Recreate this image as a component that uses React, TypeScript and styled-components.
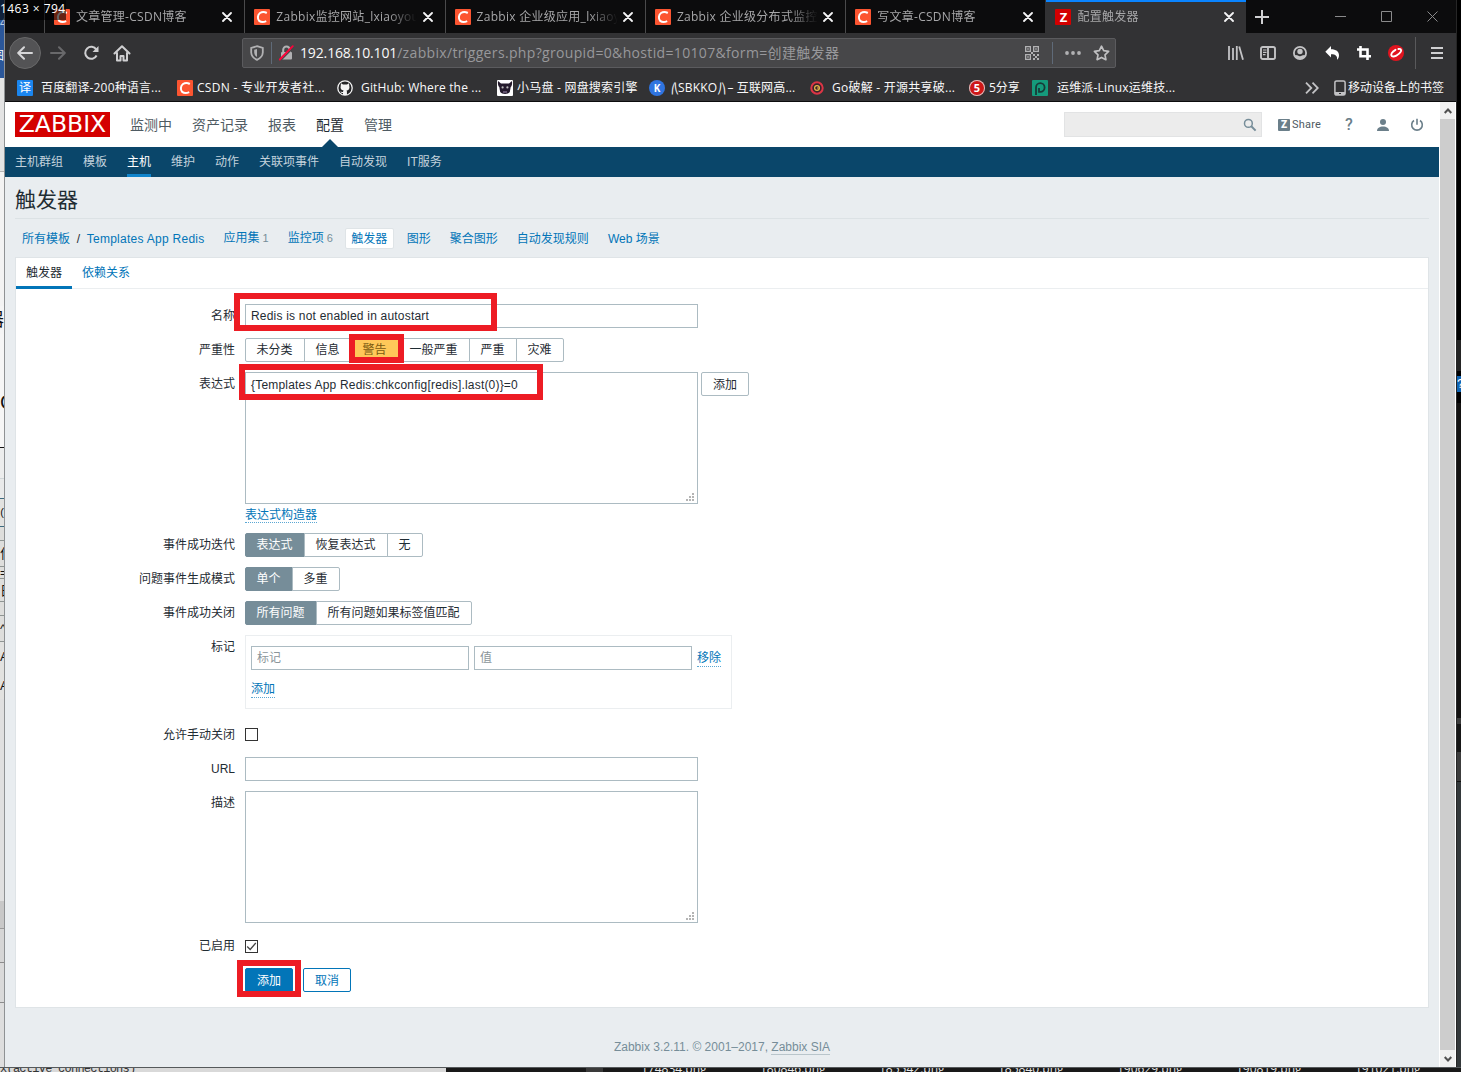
import React from "react";
import styled, { createGlobalStyle, css } from "styled-components";

const ui = `"Open Sans", "Noto Sans CJK SC", sans-serif`;
const web = `"Liberation Sans", "Noto Sans CJK SC", sans-serif`;

const Global = createGlobalStyle`
  *, *::before, *::after { box-sizing: border-box; }
  html, body { margin: 0; padding: 0; background: #000; overflow: hidden; }
  button, input, textarea { font: inherit; margin: 0; }
  svg { flex: none; }
`;

/* ---------- desktop behind the window ---------- */

const Desktop = styled.div`
  position: relative;
  width: 1461px;
  height: 1072px;
  display: grid;
  grid-template-columns: 5px 1451px 5px;
  grid-template-rows: 1067px 5px;
  overflow: hidden;
  font-family: ${web};
  font-size: 12px;
`;

const Strip = styled.div`
  display: flex;
  flex-direction: column;
  overflow: hidden;
  border-right: 1px solid #8f9294;
`;

const Slice = styled.div<{ h: number; bg: string; line?: string; fg?: string; size?: number; end?: boolean }>`
  flex: none;
  height: ${(p) => p.h}px;
  background: ${(p) => p.bg};
  border-bottom: ${(p) => (p.line ? `1px solid ${p.line}` : "0")};
  color: ${(p) => p.fg ?? "#111"};
  display: flex;
  align-items: center;
  justify-content: ${(p) => (p.end ? "flex-end" : "flex-start")};
  font-size: ${(p) => p.size ?? 13}px;
  line-height: 1;
  overflow: hidden;
  white-space: nowrap;
`;

const RightStrip = styled(Strip)`
  border: 0;
  border-left: 1px solid #262626;
  background: #050505;
`;

const Taskline = styled.div`
  grid-column: 1 / 4;
  display: flex;
  height: 5px;
  overflow: hidden;
  background: #191919;
  border-top: 1px solid #55595b;
`;

const Editor = styled.div`
  flex: none;
  width: 446px;
  height: 4px;
  background: #d9d9d9;
  color: #333;
  font: 12px/10px "Liberation Mono", monospace;
  letter-spacing: -0.75px;
  overflow: hidden;
  white-space: nowrap;
  span { display: block; margin-top: -4px; }
`;

const Gap = styled.div<{ w: number; bg: string }>`
  flex: none;
  width: ${(p) => p.w}px;
  background: ${(p) => p.bg};
`;

const FileName = styled.div`
  flex: none;
  width: 119px;
  color: #e6e6e6;
  font: 12px/12px ${ui};
  height: 4px;
  overflow: hidden;
  span { display: block; margin-top: -5px; }
`;

const SizeTip = styled.div`
  position: absolute;
  left: 0;
  top: 0;
  width: 66px;
  height: 20px;
  background: rgba(0, 0, 0, 0.6);
  color: #fff;
  font: 12px/18px ${ui};
  letter-spacing: 0.45px;
  white-space: nowrap;
`;

/* ---------- browser ---------- */

const Window = styled.div`
  display: flex;
  flex-direction: column;
  background: #323234;
  color: #f9f9fa;
  overflow: hidden;
`;

const TabStrip = styled.div`
  display: flex;
  flex: none;
  height: 33px;
  background: #0c0c0d;
  padding-left: 39px;
  font-family: ${ui};
`;

const Tab = styled.div<{ active?: boolean }>`
  flex: none;
  width: 200.3px;
  height: 33px;
  display: flex;
  align-items: center;
  padding: 0 12px 0 9px;
  border-left: 1px solid ${(p) => (p.active ? "#323234" : "#4a4a4b")};
  background: ${(p) => (p.active ? "#323234" : "transparent")};
  box-shadow: ${(p) => (p.active ? "inset 0 2px 0 #0a84ff" : "none")};
`;

const TabTitle = styled.span`
  flex: 1;
  margin-left: 6px;
  overflow: hidden;
  white-space: nowrap;
  font-size: 12px;
  line-height: 20px;
  letter-spacing: 0.28px;
  color: #a6a6a8;
  mask-image: linear-gradient(to right, #000 112px, transparent 141px);
`;

const Favicon = styled.span<{ bg: string; round?: boolean; fs?: number; weight?: number; ring?: boolean }>`
  flex: none;
  width: 16px;
  height: 16px;
  display: inline-flex;
  align-items: center;
  justify-content: center;
  background: ${(p) => p.bg};
  color: #fff;
  letter-spacing: 0;
  border-radius: ${(p) => (p.round ? "50%" : "1px")};
  box-shadow: ${(p) => (p.ring ? "inset 0 0 0 1px #d8c4c4" : "none")};
  font: ${(p) => p.weight ?? 700} ${(p) => p.fs ?? 14}px/16px ${ui};
`;

const NewTab = styled.div`
  width: 33px;
  display: flex;
  align-items: center;
  justify-content: center;
`;

const WindowButtons = styled.div`
  margin-left: auto;
  display: flex;
  align-items: center;
  gap: 35px;
  padding-right: 18px;
  height: 32px;
`;

const NavBar = styled.div`
  flex: none;
  height: 40px;
  display: flex;
  align-items: center;
  padding-left: 4px;
`;

const BackButton = styled.div`
  flex: none;
  width: 32px;
  height: 32px;
  border-radius: 50%;
  border: 1px solid #686869;
  background: #535355;
  display: flex;
  align-items: center;
  justify-content: center;
`;

const NavIcon = styled.div<{ w?: number }>`
  flex: none;
  width: ${(p) => p.w ?? 32}px;
  height: 32px;
  display: flex;
  align-items: center;
  justify-content: center;
`;

const UrlBar = styled.div`
  flex: none;
  width: 874px;
  height: 30px;
  margin-left: 104px;
  display: flex;
  align-items: center;
  background: #474749;
  border: 1px solid #5b5b5e;
  border-radius: 2px;
`;

const UrlText = styled.div`
  flex: 1;
  margin-left: -1px;
  color: #98989b;
  font: 14px/22px ${ui};
  white-space: nowrap;
  letter-spacing: 0.34px;
  b { font-weight: 400; color: #f9f9fa; letter-spacing: -0.14px; }
`;

const VRule = styled.div<{ h: number; c?: string }>`
  flex: none;
  width: 1px;
  height: ${(p) => p.h}px;
  background: ${(p) => p.c ?? "#5f6a78"};
`;

const Bookmarks = styled.div`
  flex: none;
  height: 29px;
  display: flex;
  align-items: center;
  padding: 1px 12px 0;
  border-bottom: 1px solid #0c0c0d;
  font: 12px/20px ${ui};
  color: #f9f9fa;
`;

const Bookmark = styled.div<{ w: number; gap: number; ls?: number }>`
  flex: none;
  width: ${(p) => p.w}px;
  display: flex;
  align-items: center;
  gap: ${(p) => p.gap}px;
  white-space: nowrap;
  letter-spacing: ${(p) => p.ls ?? 0}px;
`;

const Bracket = styled.span`
  display: inline-flex;
  justify-content: center;
  width: 7px;
  height: 16px;
  line-height: 16px;
  font-size: 10px;
  letter-spacing: -1.8px;
  vertical-align: middle;
`;

const MobileMarks = styled.div`
  margin-left: auto;
  display: flex;
  align-items: center;
  white-space: nowrap;
`;

const Viewport = styled.div`
  flex: 1;
  display: flex;
  min-height: 0;
`;

const ScrollBar = styled.div`
  flex: none;
  width: 17px;
  border-left: 1px solid #fff;
  border-right: 1px solid #fff;
  display: flex;
  flex-direction: column;
  background: #cdcdcd;
`;

const ScrollArrow = styled.div`
  height: 17px;
  background: #f0f0f0;
  display: flex;
  align-items: center;
  justify-content: center;
`;

const Thumb = styled.div`
  flex: 1;
  background: #cdcdcd;
`;

/* ---------- zabbix page ---------- */

const Page = styled.div`
  flex: none;
  width: 1434px;
  background: #e9edf0;
  color: #1f2c33;
  font: 12px/18px ${web};
  display: flex;
  flex-direction: column;
`;

const Header = styled.header`
  flex: none;
  height: 45px;
  background: #fff;
  display: flex;
  align-items: center;
  padding: 0 10px;
`;

const Logo = styled.div`
  width: 95px;
  height: 25px;
  background: #d40000;
  color: #fff;
  font: 23.5px/25px "DejaVu Sans", sans-serif;
  text-align: center;
  white-space: nowrap;
`;

const MainNav = styled.nav`
  display: flex;
  gap: 20px;
  margin-left: 20px;
  height: 45px;
`;

const MainItem = styled.a<{ active?: boolean }>`
  position: relative;
  font-size: 14px;
  line-height: 46px;
  color: ${(p) => (p.active ? "#1f2c33" : "#4f5b63")};
  ${(p) =>
    p.active &&
    css`
      &::after {
        content: "";
        position: absolute;
        left: 6px;
        bottom: 0;
        border: 8px solid transparent;
        border-top: 0;
        border-bottom-color: #0a466a;
      }
    `}
`;

const SearchBox = styled.div`
  margin-left: auto;
  width: 198px;
  height: 25px;
  background: #ececec;
  border: 1px solid #e2e3e4;
  display: flex;
  align-items: center;
  justify-content: flex-end;
  padding-right: 4px;
`;

const Share = styled.div`
  display: flex;
  align-items: center;
  gap: 2px;
  margin-left: 16px;
  width: 54px;
  font: 11px/14px Roboto, sans-serif;
  letter-spacing: 0.2px;
  color: #4f5b63;
`;

const ShareMark = styled.span`
  width: 12px;
  height: 12px;
  border-radius: 1px;
  background: #6b7f8a;
  color: #fff;
  font: 900 10px/12px Roboto, sans-serif;
  letter-spacing: 0;
  text-align: center;
`;

const HeaderIcon = styled.div`
  width: 34px;
  height: 24px;
  display: flex;
  align-items: center;
  justify-content: center;
  color: #6b7f8a;
  font: 500 16px/24px Roboto, sans-serif;
  &:last-child { width: 29px; justify-content: flex-end; padding-right: 5px; }
`;

const SubNav = styled.nav`
  flex: none;
  height: 30px;
  background: #0a466a;
  display: flex;
  gap: 20px;
  padding: 0 10px;
`;

const SubItem = styled.a<{ active?: boolean }>`
  height: 30px;
  line-height: 31px;
  color: ${(p) => (p.active ? "#fff" : "#c3d2dc")};
  box-shadow: ${(p) => (p.active ? "inset 0 -3px 0 #0f84cc" : "none")};
`;

const Title = styled.h1`
  flex: none;
  margin: 0 10px;
  height: 42px;
  border-bottom: 1px solid #dce2e5;
  font-size: 21px;
  font-weight: 400;
  line-height: 46px;
`;

const Crumbs = styled.div`
  flex: none;
  height: 38px;
  display: flex;
  align-items: center;
  padding: 1px 0 0 17px;
  white-space: nowrap;
`;

const Crumb = styled.a<{ ml: number; ls?: number; up?: number }>`
  margin-left: ${(p) => p.ml}px;
  margin-bottom: ${(p) => p.up ?? 0}px;
  letter-spacing: ${(p) => p.ls ?? 0}px;
  color: #0275b8;
`;

const Count = styled.sup`
  font-size: 11px;
  line-height: 1;
  vertical-align: baseline;
  margin-left: 3px;
  color: #768d99;
`;

const CrumbActive = styled.a`
  margin-left: 12px;
  margin-right: 1px;
  width: 49px;
  height: 21px;
  background: #fff;
  border: 1px solid #dfe4e7;
  border-radius: 2px;
  color: #0275b8;
  line-height: 20px;
  text-align: center;
`;

const Panel = styled.section`
  flex: none;
  margin: 0 10px;
  width: 1414px;
  height: 751px;
  background: #fff;
  border: 1px solid #dfe4e7;
`;

const PanelTabs = styled.div`
  display: flex;
  height: 31px;
  border-bottom: 1px solid #ebeef0;
`;

const PanelTab = styled.a<{ active?: boolean }>`
  height: 31px;
  padding: 0 10px;
  line-height: 31px;
  color: ${(p) => (p.active ? "#1f2c33" : "#0275b8")};
  box-shadow: ${(p) => (p.active ? "inset 0 -3px 0 #0275b8" : "none")};
`;

const Form = styled.div`
  padding-top: 15px;
  display: flex;
  flex-direction: column;
  gap: 10px;
`;

const Row = styled.div<{ h?: number }>`
  height: ${(p) => p.h ?? 24}px;
  display: grid;
  grid-template-columns: 219px 1fr;
  column-gap: 10px;
`;

const Label = styled.label`
  text-align: right;
  line-height: 24px;
  white-space: nowrap;
`;

const Field = styled.div<{ col?: boolean }>`
  display: flex;
  align-items: flex-start;
  flex-wrap: ${(p) => (p.col ? "wrap" : "nowrap")};
`;

const inputCss = css`
  border: 1px solid #acbbc2;
  background: #fff;
  color: #1f2c33;
  border-radius: 0;
  outline: none;
  padding: 0 5px;
`;

const Input = styled.input<{ w: number; ls?: number }>`
  ${inputCss}
  width: ${(p) => p.w}px;
  height: 24px;
  letter-spacing: ${(p) => p.ls ?? 0}px;
  &::placeholder { color: #8b959a; opacity: 1; }
`;

const Area = styled.div`
  ${inputCss}
  width: 453px;
  height: 132px;
  padding-top: 3px;
  letter-spacing: 0.19px;
  display: flex;
  justify-content: space-between;
  padding-right: 3px;
  svg { align-self: flex-end; margin-bottom: 2px; }
`;

const Segments = styled.div`
  display: flex;
`;

const Segment = styled.button<{ tone?: "on" | "warn" }>`
  height: 24px;
  padding: 0 11.5px 0 10.5px;
  margin-right: -1px;
  white-space: nowrap;
  line-height: 21px;
  border: 1px solid ${(p) => (p.tone === "on" ? "#768d99" : "#acbbc2")};
  background: ${(p) => (p.tone === "on" ? "#768d99" : p.tone === "warn" ? "#ffc859" : "#fff")};
  color: ${(p) => (p.tone === "on" ? "#fff" : p.tone === "warn" ? "#7a5a10" : "#1f2c33")};
  &:first-child { border-radius: 2px 0 0 2px; }
  &:last-child { border-radius: 0 2px 2px 0; }
`;

const Button = styled.button<{ kind: "plain" | "primary" | "outline"; ml?: number }>`
  width: 48px;
  height: 24px;
  margin-left: ${(p) => p.ml ?? 0}px;
  padding: 2px 0 0;
  line-height: 20px;
  border-radius: 2px;
  border: 1px solid ${(p) => (p.kind === "plain" ? "#acbbc2" : "#0275b8")};
  background: ${(p) => (p.kind === "primary" ? "#0275b8" : "#fff")};
  color: ${(p) => (p.kind === "primary" ? "#fff" : p.kind === "plain" ? "#1f2c33" : "#0275b8")};
`;

const DotLink = styled.a<{ lh?: number }>`
  height: 16px;
  line-height: ${(p) => p.lh ?? 15}px;
  color: #0275b8;
  border-bottom: 1px dotted #5ba7d3;
`;

const ExprLinkLine = styled.div`
  width: 100%;
  height: 19px;
  padding-top: 3px;
  display: flex;
`;

const TagBox = styled.div`
  width: 487px;
  height: 74px;
  border: 1px solid #ebeef0;
  padding: 10px 5px 0;
`;

const TagRow = styled.div`
  display: flex;
  gap: 5px;
  height: 31px;
  > a { margin-top: 5px; }
`;

const Check = styled.span<{ top: number }>`
  width: 13px;
  height: 13px;
  margin-top: ${(p) => p.top}px;
  border: 1px solid #333;
  background: #fff;
  display: flex;
  align-items: center;
  justify-content: center;
`;

const Footer = styled.footer`
  flex: 1;
  padding-top: 30px;
  text-align: center;
  color: #768d99;
  a { border-bottom: 1px solid #b9c5cb; }
`;

/* Hand-drawn highlight frames laid over the page */
const Marker = styled.div<{ x: number; y: number; w: number; h: number }>`
  position: absolute;
  left: ${(p) => p.x}px;
  top: ${(p) => p.y}px;
  width: ${(p) => p.w}px;
  height: ${(p) => p.h}px;
  border: 6px solid #ed1c24;
`;

/* ---------- icons ---------- */

const CloseX = () => (
  <svg width="10" height="10" viewBox="0 0 10 10" stroke="#f5f5f6" strokeWidth="1.8" strokeLinecap="round">
    <path d="M1 1l8 8M9 1l-8 8" />
  </svg>
);

const Csdn = () => (
  <Favicon bg="#fc5531">
    <svg width="16" height="16" viewBox="0 0 16 16" fill="none" stroke="#fff" strokeWidth="2">
      <path d="M12.800 4C10.800 2.900 8 2.800 6 4C3.500 5.700 3.200 10 5.200 11.900C7.200 13.500 10 13.200 12.200 12.100" />
    </svg>
  </Favicon>
);

const Grip = () => (
  <svg width="8" height="8" viewBox="0 0 8 8" fill="#b4b4b4">
    <path d="M6 0h2v2H6zM3 3h2v2H3zM6 3h2v2H6zM0 6h2v2H0zM3 6h2v2H3zM6 6h2v2H6z" />
  </svg>
);

const Qr = () => (
  <svg width="14" height="14" viewBox="0 0 14 14" fill="#b1b1b3" fillRule="evenodd">
    <path d="M0 0h6v6H0zM1.300 1.300v3.400h3.400V1.300zM8 0h6v6H8zM9.300 1.300v3.400h3.400V1.300zM0 8h6v6H0zM1.300 9.300v3.400h3.400V9.300z" />
    <path d="M2.300 2.300h1.400v1.400H2.300zM10.300 2.300h1.400v1.400h-1.400zM2.300 10.300h1.400v1.400H2.300zM6 6h2v2H6zM8 8h2v2H8zM12 8h2v2h-2zM10 10h2v2h-2zM8 12h2v2H8zM12 12h2v2h-2z" />
  </svg>
);

const tabs = [
  { title: "文章管理-CSDN博客" },
  { title: "Zabbix监控网站_lxiaoyouyou" },
  { title: "Zabbix 企业级应用_lxiaoyou" },
  { title: "Zabbix 企业级分布式监控_lx" },
  { title: "写文章-CSDN博客" },
];

const leftSlices: React.ComponentProps<typeof Slice>[] = [
  { h: 13, bg: "#24508f" },
  { h: 20, bg: "#2b579a", fg: "#b9cbe6", size: 12, children: "4-" },
  { h: 45, bg: "#2b579a", fg: "#fff", size: 12, children: "图", end: true },
  { h: 94, bg: "#e4e4e4", line: "#b5b5b5" },
  { h: 134, bg: "#f3f3f3" },
  { h: 28, bg: "#f5f5f5", children: "器", end: true, size: 18 },
  { h: 50, bg: "#f6f6f6" },
  { h: 36, bg: "#f6f6f6", children: "C", size: 20 },
  { h: 28, bg: "#f6f6f6", line: "#111" },
  { h: 31, bg: "#eceded", line: "#d0d6d8" },
  { h: 20, bg: "#e9eaea", line: "#3d6b80" },
  { h: 28, bg: "#e2e2e0", line: "#3d6b80", children: "(", size: 11, end: true },
  { h: 14, bg: "#dededc", line: "#8f9593" },
  { h: 26, bg: "#dededc", line: "#8f9593", children: "作" },
  { h: 12, bg: "#dededc", line: "#8f9593", children: "=" },
  { h: 23, bg: "#dededc", line: "#8f9593", children: "日" },
  { h: 14, bg: "#dededc", line: "#8f9593" },
  { h: 26, bg: "#dededc", line: "#8f9593", children: "^" },
  { h: 29, bg: "#e2e2e0", children: "A" },
  { h: 28, bg: "#e2e2e0", children: "A" },
  { h: 202, bg: "#e0e0e0" },
  { h: 28, bg: "#c8c8c8", line: "#9a9a9a" },
  { h: 34, bg: "#d6d6d6", line: "#8c8c8c" },
  { h: 40, bg: "#dadada", line: "#8c8c8c" },
  { h: 66, bg: "#dedede" },
];

const files = ["174834.png", "180846.png", "185542.png", "185840.png", "190629.png", "190819.png", "191021.png"];

export default function App() {
  return (
    <>
      <Global />
      <Desktop>
        <Strip>
          {leftSlices.map((s, i) => (
            <Slice key={i} {...s} />
          ))}
        </Strip>

        <Window>
          <TabStrip>
            {tabs.map((t) => (
              <Tab key={t.title}>
                <Csdn />
                <TabTitle>{t.title}</TabTitle>
                <CloseX />
              </Tab>
            ))}
            <Tab active>
              <Favicon bg="#d40000" fs={13}>Z</Favicon>
              <TabTitle>配置触发器</TabTitle>
              <CloseX />
            </Tab>
            <NewTab>
              <svg width="14" height="14" viewBox="0 0 14 14" stroke="#d0d0d2" strokeWidth="2">
                <path d="M7 0v14M0 7h14" />
              </svg>
            </NewTab>
            <WindowButtons>
              <svg width="11" height="11" viewBox="0 0 11 11" stroke="#8a8a8b"><path d="M0 5.500h11" /></svg>
              <svg width="11" height="11" viewBox="0 0 11 11" stroke="#8a8a8b" fill="none"><path d="M.5 .5h10v10H.5z" /></svg>
              <svg width="11" height="11" viewBox="0 0 11 11" stroke="#8a8a8b"><path d="M.5 .5l10 10M10.500 .5l-10 10" /></svg>
            </WindowButtons>
          </TabStrip>

          <NavBar>
            <BackButton>
              <svg width="16" height="14" viewBox="0 0 16 14" fill="none" stroke="#d7d7d9" strokeWidth="2" strokeLinecap="round" strokeLinejoin="round">
                <path d="M15 7H1.500M7 1.200L1.200 7L7 12.800" />
              </svg>
            </BackButton>
            <NavIcon w={34}>
              <svg width="16" height="14" viewBox="0 0 16 14" fill="none" stroke="#69696b" strokeWidth="2" strokeLinecap="round" strokeLinejoin="round">
                <path d="M1 7h13.500M9 1.200L14.800 7L9 12.800" />
              </svg>
            </NavIcon>
            <NavIcon w={31}>
              <svg width="16" height="16" viewBox="0 0 16 16" fill="none" stroke="#cfcfd1" strokeWidth="2">
                <path d="M13.300 4.600A6 6 0 1 0 13.600 10.500" />
                <path d="M15.500 1v6H9.500z" fill="#cfcfd1" stroke="none" />
              </svg>
            </NavIcon>
            <NavIcon>
              <svg width="18" height="17" viewBox="0 0 18 17" fill="none" stroke="#cfcfd1" strokeWidth="2" strokeLinejoin="round" strokeLinecap="round">
                <path d="M1.500 8.500L9 1.300L16.500 8.500" />
                <path d="M4 8v7.500h3.500V11h3v4.500H14V8" />
              </svg>
            </NavIcon>
            <UrlBar>
              <NavIcon w={28}>
                <svg width="14" height="16" viewBox="0 0 14 16" fill="none" stroke="#b1b1b3" strokeWidth="1.8">
                  <path d="M7 1.200L12.800 3V7.500C12.600 11 10 13.500 7 14.800C4 13.500 1.400 11 1.200 7.500V3z" />
                  <path d="M7 4v8C5 11 4.200 9 4.200 7V4.700z" fill="#b1b1b3" stroke="none" />
                </svg>
              </NavIcon>
              <VRule h={22} />
              <NavIcon w={29}>
                <svg width="15" height="16" viewBox="0 0 15 16" fill="none">
                  <path d="M4.200 7V4.800a3.300 3.300 0 0 1 6.600 0V7" stroke="#b1b1b3" strokeWidth="2" />
                  <rect x="2" y="7" width="11" height="7.500" rx="1" fill="#b1b1b3" />
                  <path d="M1.500 15.500L14.500 2.500" stroke="#474749" strokeWidth="1.500" />
                  <path d="M.8 14.500L13.800 1.200" stroke="#ff0039" strokeWidth="1.800" strokeLinecap="round" />
                </svg>
              </NavIcon>
              <UrlText><b>192.168.10.101</b>/zabbix/triggers.php?groupid=0&amp;hostid=10107&amp;form=创建触发器</UrlText>
              <NavIcon w={40}><Qr /></NavIcon>
              <VRule h={22} />
              <NavIcon w={40}>
                <svg width="16" height="4" viewBox="0 0 16 4" fill="#b1b1b3">
                  <circle cx="2" cy="2" r="1.900" /><circle cx="8" cy="2" r="1.900" /><circle cx="14" cy="2" r="1.900" />
                </svg>
              </NavIcon>
              <NavIcon w={16}>
                <svg width="17" height="16" viewBox="0 0 17 16" fill="none" stroke="#c0c0c2" strokeWidth="1.700" strokeLinejoin="round">
                  <path d="M8.500 1.200l2.200 4.500 4.900.7-3.600 3.400.9 4.900-4.400-2.300-4.400 2.300.9-4.900L1.400 6.400l4.900-.7z" />
                </svg>
              </NavIcon>
              <NavIcon w={6} />
            </UrlBar>
            <NavIcon w={104} />
            <NavIcon>
              <svg width="16" height="14" viewBox="0 0 16 14" stroke="#c3c3c5" strokeWidth="1.800">
                <path d="M1 0v14M5 2v12M8.800 0v14M11.200 .5L15 13.700" />
              </svg>
            </NavIcon>
            <NavIcon>
              <svg width="16" height="14" viewBox="0 0 16 14" fill="none" stroke="#c3c3c5" strokeWidth="1.900">
                <rect x="1" y="1" width="14" height="12" rx="1.800" />
                <path d="M8 1v12" /><path d="M3 4h3.500M3 6.300h3.500M3 8.600h2.500" strokeWidth="1.200" />
              </svg>
            </NavIcon>
            <NavIcon>
              <svg width="14" height="14" viewBox="0 0 14 14">
                <circle cx="7" cy="7" r="6.100" fill="none" stroke="#c3c3c5" strokeWidth="1.800" />
                <circle cx="7" cy="5.500" r="2.700" fill="#c3c3c5" />
                <path d="M2 9c3-.2 3 1.200 5 1.200S9 8.800 12 9c-.8 3-3 4-5 4s-4.200-1-5-4z" fill="#c3c3c5" />
              </svg>
            </NavIcon>
            <NavIcon>
              <svg width="15" height="14" viewBox="0 0 15 14" fill="#fff">
                <path d="M6 0v3.200c5 0 8 2.300 8 6 0 2-.8 3.700-2 4.600.6-3.600-1.200-5.500-6-5.500v3.200L.3 5.800z" />
              </svg>
            </NavIcon>
            <NavIcon>
              <svg width="14" height="14" viewBox="0 0 14 14" fill="none" stroke="#fff" strokeWidth="2.600">
                <path d="M3.500 0v10.300H14M0 3.500h10.500V14" />
              </svg>
            </NavIcon>
            <NavIcon>
              <svg width="16" height="16" viewBox="0 0 16 16" fill="none">
                <circle cx="8" cy="8" r="8" fill="#e1141f" />
                <path d="M7.500 4.800C3.800 6.800 2.400 9.600 3.800 11C5.800 12.600 11 9.800 12.800 6.600C13.700 4.600 12.600 3.400 10.400 4" stroke="#fff" strokeWidth="1.900" strokeLinecap="round" />
              </svg>
            </NavIcon>
            <NavIcon w={3} />
            <VRule h={32} c="#59595b" />
            <NavIcon w={42}>
              <svg width="12" height="12" viewBox="0 0 12 12" stroke="#cfcfd1" strokeWidth="2">
                <path d="M0 1h12M0 6h12M0 11h12" />
              </svg>
            </NavIcon>
          </NavBar>

          <Bookmarks>
            <Bookmark w={160} gap={8} ls={0.15}><Favicon bg="#1a86f0" fs={12} weight={400}>译</Favicon>百度翻译-200种语言...</Bookmark>
            <Bookmark w={160} gap={4} ls={0.28}><Csdn />CSDN - 专业开发者社...</Bookmark>
            <Bookmark w={160} gap={8} ls={0.17}>
              <svg width="16" height="16" viewBox="0 0 16 16">
                <circle cx="8" cy="8" r="7.200" fill="#242426" stroke="#f4f4f4" strokeWidth="1.300" />
                <path d="M4 3.300l2 1.200h4l2-1.200.3 2.600c.8 2.800-.7 4.300-2.800 4.600.5.600.5 1 .5 4.500H6v-2c-1.600.2-2-.6-2.600-1.500 1 .1 1.300.8 2.600.5 0-.6.200-1 .6-1.500C4.400 10 3 8.700 3.700 5.900z" fill="#f4f4f4" />
              </svg>
              GitHub: Where the ...
            </Bookmark>
            <Bookmark w={152} gap={4} ls={0.22}>
              <Favicon bg="#fff">
                <svg width="16" height="16" viewBox="0 0 16 16">
                  <path d="M1 1l3 2.500h8L15 1c.4 3-.3 5-1.300 6L12.800 12c-1.500 2.500-8 2.500-9.600 0L2.300 7C1.300 6 .6 4 1 1z" fill="#241a2c" />
                  <circle cx="5.600" cy="7.400" r="1.100" fill="#bbb" /><circle cx="10.400" cy="7.400" r="1.100" fill="#bbb" />
                  <path d="M6 12h4" stroke="#a08bb0" />
                </svg>
              </Favicon>
              小马盘 - 网盘搜索引擎
            </Bookmark>
            <Bookmark w={160} gap={6} ls={0.15}>
              <Favicon bg="#2f74e0" round fs={10}>K</Favicon>
              <span><Bracket>⎛⎝</Bracket>SBKKO<Bracket>⎠⎞</Bracket> – 互联网高...</span>
            </Bookmark>
            <Bookmark w={160} gap={7} ls={0.25}>
              <svg width="16" height="16" viewBox="0 0 16 16" fill="none">
                <circle cx="8" cy="8" r="5.700" fill="#39242a" stroke="#dc3545" strokeWidth="2" />
                <circle cx="8" cy="8" r="2.400" stroke="#e9b949" strokeWidth="1.200" /><path d="M8 8h2.500" stroke="#e9b949" />
              </svg>
              Go破解 - 开源共享破...
            </Bookmark>
            <Bookmark w={63} gap={4}>
              <Favicon bg="#cf1717" round ring fs={11}>5</Favicon>
              5分享
            </Bookmark>
            <Bookmark w={160} gap={9} ls={0.18}>
              <Favicon bg="#159a7b">
                <svg width="16" height="16" viewBox="0 0 16 16" fill="none" stroke="#173b38" strokeWidth="1.800">
                  <path d="M4 15V7.500a4.300 4.300 0 1 1 4.300 4.300H7V8" />
                </svg>
              </Favicon>
              运维派-Linux运维技...
            </Bookmark>
            <MobileMarks>
              <svg width="14" height="12" viewBox="0 0 14 12" fill="none" stroke="#c3c3c5" strokeWidth="1.800">
                <path d="M1 .7L6.300 6L1 11.300M7.500 .7L12.800 6L7.500 11.300" />
              </svg>
              <NavIcon w={15} />
              <svg width="12" height="16" viewBox="0 0 12 16">
                <rect x=".9" y=".9" width="10.200" height="14.200" rx="1.700" fill="none" stroke="#c3c3c5" strokeWidth="1.500" />
                <path d="M1 12h10v3H1z" fill="#c3c3c5" /><path d="M5 13.500h2" stroke="#323234" />
              </svg>
              <NavIcon w={2} />
              移动设备上的书签
            </MobileMarks>
          </Bookmarks>

          <Viewport>
            <Page>
              <Header>
                <Logo>ZABBIX</Logo>
                <MainNav>
                  <MainItem>监测中</MainItem>
                  <MainItem>资产记录</MainItem>
                  <MainItem>报表</MainItem>
                  <MainItem active>配置</MainItem>
                  <MainItem>管理</MainItem>
                </MainNav>
                <SearchBox>
                  <svg width="14" height="14" viewBox="0 0 14 14" fill="none" stroke="#768d99">
                    <circle cx="5.400" cy="5.400" r="3.900" strokeWidth="1.500" />
                    <path d="M8.300 8.300l4.300 4.300" strokeWidth="2" />
                  </svg>
                </SearchBox>
                <Share><ShareMark>Z</ShareMark>Share</Share>
                <HeaderIcon>?</HeaderIcon>
                <HeaderIcon>
                  <svg width="12" height="12" viewBox="0 0 12 12" fill="#6b7f8a">
                    <circle cx="6" cy="3" r="3" /><path d="M0 12c0-3 2.500-4.500 6-4.500s6 1.500 6 4.500z" />
                  </svg>
                </HeaderIcon>
                <HeaderIcon>
                  <svg width="14" height="14" viewBox="0 0 14 14" fill="none" stroke="#6b7f8a" strokeWidth="1.600">
                    <path d="M7 .8v6M4 2.500a5.300 5.300 0 1 0 6 0" />
                  </svg>
                </HeaderIcon>
              </Header>
              <SubNav>
                <SubItem>主机群组</SubItem>
                <SubItem>模板</SubItem>
                <SubItem active>主机</SubItem>
                <SubItem>维护</SubItem>
                <SubItem>动作</SubItem>
                <SubItem>关联项事件</SubItem>
                <SubItem>自动发现</SubItem>
                <SubItem>IT服务</SubItem>
              </SubNav>
              <Title>触发器</Title>
              <Crumbs>
                <Crumb ml={0}>所有模板</Crumb>
                <span>&nbsp; /&nbsp;&nbsp;</span>
                <Crumb ml={0} ls={0.27}>Templates App Redis</Crumb>
                <Crumb ml={19} up={2}>应用集<Count>1</Count></Crumb>
                <Crumb ml={19} up={2}>监控项<Count>6</Count></Crumb>
                <CrumbActive>触发器</CrumbActive>
                <Crumb ml={12}>图形</Crumb>
                <Crumb ml={19}>聚合图形</Crumb>
                <Crumb ml={19}>自动发现规则</Crumb>
                <Crumb ml={19}>Web 场景</Crumb>
              </Crumbs>

              <Panel>
                <PanelTabs>
                  <PanelTab active>触发器</PanelTab>
                  <PanelTab>依赖关系</PanelTab>
                </PanelTabs>
                <Form>
                  <Row>
                    <Label>名称</Label>
                    <Field><Input w={453} ls={0.2} defaultValue="Redis is not enabled in autostart" /></Field>
                  </Row>
                  <Row>
                    <Label>严重性</Label>
                    <Segments>
                      <Segment>未分类</Segment>
                      <Segment>信息</Segment>
                      <Segment tone="warn">警告</Segment>
                      <Segment>一般严重</Segment>
                      <Segment>严重</Segment>
                      <Segment>灾难</Segment>
                    </Segments>
                  </Row>
                  <Row h={151}>
                    <Label>表达式</Label>
                    <Field col>
                      <Area>{"{Templates App Redis:chkconfig[redis].last(0)}=0"}<Grip /></Area>
                      <Button kind="plain" ml={3}>添加</Button>
                      <ExprLinkLine><DotLink lh={17}>表达式构造器</DotLink></ExprLinkLine>
                    </Field>
                  </Row>
                  <Row>
                    <Label>事件成功迭代</Label>
                    <Segments>
                      <Segment tone="on">表达式</Segment>
                      <Segment>恢复表达式</Segment>
                      <Segment>无</Segment>
                    </Segments>
                  </Row>
                  <Row>
                    <Label>问题事件生成模式</Label>
                    <Segments>
                      <Segment tone="on">单个</Segment>
                      <Segment>多重</Segment>
                    </Segments>
                  </Row>
                  <Row>
                    <Label>事件成功关闭</Label>
                    <Segments>
                      <Segment tone="on">所有问题</Segment>
                      <Segment>所有问题如果标签值匹配</Segment>
                    </Segments>
                  </Row>
                  <Row h={78}>
                    <Label>标记</Label>
                    <TagBox>
                      <TagRow>
                        <Input w={218} placeholder="标记" />
                        <Input w={218} placeholder="值" />
                        <DotLink>移除</DotLink>
                      </TagRow>
                      <TagRow><DotLink>添加</DotLink></TagRow>
                    </TagBox>
                  </Row>
                  <Row>
                    <Label>允许手动关闭</Label>
                    <Field><Check top={5} /></Field>
                  </Row>
                  <Row>
                    <Label>URL</Label>
                    <Field><Input w={453} /></Field>
                  </Row>
                  <Row h={133}>
                    <Label>描述</Label>
                    <Field><Area><span /><Grip /></Area></Field>
                  </Row>
                  <Row>
                    <Label>已启用</Label>
                    <Field>
                      <Check top={6}>
                        <svg width="11" height="11" viewBox="0 0 11 11" fill="none" stroke="#444" strokeWidth="1.300">
                          <path d="M1.200 5.500l3 3L9.800 2" />
                        </svg>
                      </Check>
                    </Field>
                  </Row>
                  <Row>
                    <span />
                    <Field>
                      <Button kind="primary">添加</Button>
                      <Button kind="outline" ml={10}>取消</Button>
                    </Field>
                  </Row>
                </Form>
              </Panel>
              <Footer>Zabbix 3.2.11. © 2001–2017, <a>Zabbix SIA</a></Footer>
            </Page>
            <ScrollBar>
              <ScrollArrow>
                <svg width="8" height="6" viewBox="0 0 8 6" fill="none" stroke="#505050" strokeWidth="2"><path d="M.7 5L4 1.500L7.300 5" /></svg>
              </ScrollArrow>
              <Thumb />
              <ScrollArrow>
                <svg width="8" height="6" viewBox="0 0 8 6" fill="none" stroke="#505050" strokeWidth="2"><path d="M.7 1L4 4.500L7.300 1" /></svg>
              </ScrollArrow>
            </ScrollBar>
          </Viewport>
        </Window>

        <RightStrip>
          <Slice h={340} bg="#000" />
          <Slice h={31} bg="#242424" />
          <Slice h={5} bg="#000" />
          <Slice h={16} bg="#1064b4" fg="#fff" size={12}>?</Slice>
          <Slice h={11} bg="#000" />
          <Slice h={315} bg="#131211" />
          <Slice h={6} bg="#3c3c3c" />
          <Slice h={28} bg="#161616" />
          <Slice h={30} bg="#3c3c3c" line="#111" />
          <Slice h={286} bg="#33383a" />
        </RightStrip>

        <Taskline>
          <Editor><span>x(active connections)</span></Editor>
          <Gap w={140} bg="#191919" />
          <Gap w={17} bg="#3a3a3a" />
          <Gap w={38} bg="#191919" />
          {files.map((f) => (
            <FileName key={f}><span>{f}</span></FileName>
          ))}
        </Taskline>

        <Marker x={234} y={293} w={263} h={38} />
        <Marker x={349} y={334} w={55} h={29} />
        <Marker x={239} y={364} w={304} h={36} />
        <Marker x={237} y={960} w={64} h={37} />
        <SizeTip>1463 × 794</SizeTip>
      </Desktop>
    </>
  );
}
